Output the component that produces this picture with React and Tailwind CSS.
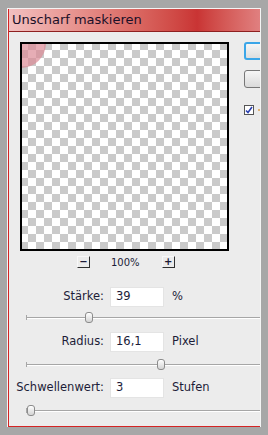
import React from "react"

const font = { fontFamily: "Tahoma, 'DejaVu Sans', sans-serif" }

function Slider({ thumb }) {
  return (
    <div className="relative h-[12px] ml-[17px] mr-[-20px] shrink-0">
      <div className="absolute left-0 right-0 top-[5px] h-[2px] border-t border-[#a6a6a6] border-b border-b-white" />
      <div className="absolute left-0 top-[3px] w-[1px] h-[5px] bg-[#a6a6a6]" />
      <div
        className="absolute top-0 w-[8px] h-[11px] rounded-[3px] border border-[#8c8c8c] bg-gradient-to-b from-white to-[#d4d4d4]"
        style={{ left: thumb }}
      />
    </div>
  )
}

function Field({ label, value, unit }) {
  return (
    <div className="flex items-center h-[20px] shrink-0">
      <div className="w-[101px] shrink-0 text-right pr-[6px]">{label}</div>
      <div className="w-[54px] h-[20px] shrink-0 bg-white border border-[#e4e4e4] pl-[5px] flex items-center">{value}</div>
      <div className="pl-[8px]">{unit}</div>
    </div>
  )
}

function ZoomBtn({ children }) {
  return (
    <div className="w-[13px] h-[12px] bg-[#ececec] border border-t-[#f8f8f8] border-l-[#f8f8f8] border-r-[#303030] border-b-[#303030] flex items-center justify-center text-[10px] leading-none font-bold">
      {children}
    </div>
  )
}

export default function App() {
  return (
    <div className="w-[268px] h-[435px] bg-[#a7a7a7] pl-[7px] pt-[8px] overflow-hidden" style={font}>
      <div className="w-[254px] h-[419px] bg-[#f4f4f4] pl-[1px] pt-[1px] pr-[1px]">
        <div className="w-full h-full flex flex-col border-l border-b border-[#d42424] bg-[#ececec] overflow-hidden text-[11.5px] text-[#1c1c38]">
          <div className="h-[23px] shrink-0 flex items-center pl-[3px] border-b border-[#8e2020] bg-gradient-to-r from-[#f2c0c0] via-[#c93434] via-75% to-[#e08080] text-[13px] text-[#1a1028]">
            Unscharf maskieren
          </div>
          <div className="flex-1 flex flex-col">
            <div className="flex shrink-0">
              <div className="relative shrink-0 ml-[11px] mt-[10px] w-[209px] h-[209px] border-2 border-black bg-[conic-gradient(#cacaca_25%,#fff_0_50%,#cacaca_0_75%,#fff_0)] bg-[length:16px_16px] bg-[position:-2px_-2px] overflow-hidden">
                <div className="absolute -left-[26px] -top-[26px] w-[50px] h-[50px] rounded-full bg-[#dc8a96] opacity-70" />
              </div>
              <div className="ml-[15px] mt-[10px] flex flex-col shrink-0">
                <div className="w-[70px] h-[18px] rounded-[3px] border-2 border-[#3ba6e8] bg-gradient-to-b from-[#f6f6f6] to-[#dedede]" />
                <div className="mt-[10px] w-[70px] h-[18px] rounded-[3px] border border-[#777] bg-gradient-to-b from-[#f6f6f6] to-[#dadada]" />
                <div className="mt-[17px] flex items-center">
                  <div className="w-[10px] h-[10px] border border-[#555] bg-white flex items-center justify-center">
                    <svg width="8" height="8" viewBox="0 0 8 8">
                      <path d="M1 4.5 L3 6.5 L7 1" stroke="#2a3fb0" strokeWidth="1.6" fill="none" />
                    </svg>
                  </div>
                  <div className="ml-[4px] w-[2px] h-[2px] rounded-full bg-[#e0a050]" />
                </div>
              </div>
            </div>
            <div className="flex items-center mt-[4px] h-[14px] shrink-0">
              <div className="ml-[68px]"><ZoomBtn>−</ZoomBtn></div>
              <div className="ml-[21px] text-[10px]">100%</div>
              <div className="ml-[22px]"><ZoomBtn>+</ZoomBtn></div>
            </div>
            <div className="mt-[18px]">
              <Field label="Stärke:" value="39" unit="%" />
            </div>
            <div className="mt-[5px]"><Slider thumb={59} /></div>
            <div className="mt-[8px]">
              <Field label="Radius:" value="16,1" unit="Pixel" />
            </div>
            <div className="mt-[7px]"><Slider thumb={131} /></div>
            <div className="mt-[7px]">
              <Field label="Schwellenwert:" value="3" unit="Stufen" />
            </div>
            <div className="mt-[7px]"><Slider thumb={1} /></div>
          </div>
        </div>
      </div>
    </div>
  )
}
